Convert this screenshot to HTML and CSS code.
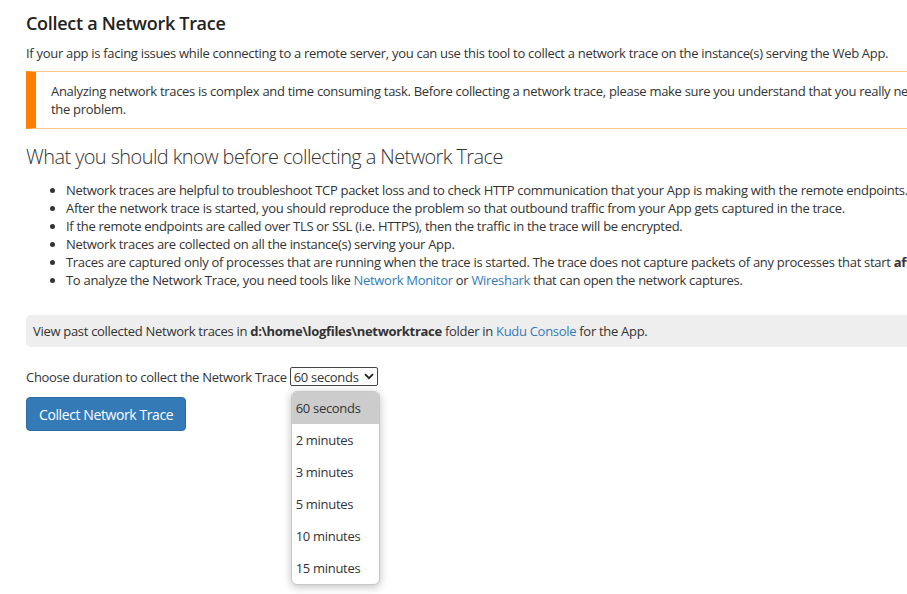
FILE: index.html
```html
<!DOCTYPE html>
<html lang="en">
<head>
  <meta charset="UTF-8">
  <meta name="viewport" content="width=device-width, initial-scale=1.0">
  <title>Collect a Network Trace</title>
  <link rel="stylesheet" href="styles.css">
</head>
<body>

  <div class="page">
    <h1>Collect a Network Trace</h1>
    <p class="intro">If your app is facing issues while connecting to a remote server, you can use this tool to collect a network trace on the instance(s) serving the Web App.</p>

    <div class="warning">
      Analyzing network traces is complex and time consuming task. Before collecting a network trace, please make sure you understand that you really need a network trace to troubleshoot<br>the problem.
    </div>

    <h2>What you should know before collecting a Network Trace</h2>
    <ul class="notes">
      <li>Network traces are helpful to troubleshoot TCP packet loss and to check HTTP communication that your App is making with the remote endpoints.</li>
      <li>After the network trace is started, you should reproduce the problem so that outbound traffic from your App gets captured in the trace.</li>
      <li>If the remote endpoints are called over TLS or SSL (i.e. HTTPS), then the traffic in the trace will be encrypted.</li>
      <li>Network traces are collected on all the instance(s) serving your App.</li>
      <li>Traces are captured only of processes that are running when the trace is started. The trace does not capture packets of any processes that start <b>after</b> the trace is started.</li>
      <li>To analyze the Network Trace, you need tools like <a href="#">Network Monitor</a> or <a href="#">Wireshark</a> that can open the network captures.</li>
    </ul>

    <div class="info">
      View past collected Network traces in <b>d:\home\logfiles\networktrace</b> folder in <a href="#">Kudu Console</a> for the App.
    </div>

    <div class="duration">
      <span>Choose duration to collect the Network Trace</span>
      <div class="select">
        <span>60 seconds</span>
        <svg width="10" height="7" viewBox="0 0 10 7"><path d="M1 1.2 L5 5.2 L9 1.2" fill="none" stroke="#222" stroke-width="1.8"/></svg>
        <ul class="options">
          <li class="selected">60 seconds</li>
          <li>2 minutes</li>
          <li>3 minutes</li>
          <li>5 minutes</li>
          <li>10 minutes</li>
          <li>15 minutes</li>
        </ul>
      </div>
    </div>

    <button class="btn">Collect Network Trace</button>
  </div>

</body>
</html>
```

FILE: styles.css
```css
html {
  overflow: hidden;
}
body {
  margin: 0;
  min-height: 594px;
  background-color: #fff;
  color: #333;
  font-family: "Open Sans", "Noto Sans", sans-serif;
  font-size: 13px;
  line-height: 18px;
  letter-spacing: -0.3px;
}
a {
  color: #337ab7;
  text-decoration: none;
}
.page {
  width: 1300px;
  padding: 11px 26px;
}
h1 {
  margin: 0;
  color: #222;
  font-size: 18px;
  font-weight: 600;
  line-height: 24px;
}
.intro {
  margin: 9px 0 9px;
}
.warning {
  width: 1200px;
  padding: 10px 16px 10px 15px;
  border-left: 10px solid #ff8000;
  border-top: 1px solid #fcc98c;
  border-bottom: 1px solid #fcc98c;
}
h2 {
  margin: 14px 0 0;
  font-size: 20px;
  font-weight: 300;
  line-height: 28px;
  letter-spacing: -0.6px;
}
.notes {
  margin: 10px 0 0;
  padding-left: 40px;
}
.info {
  margin-top: 26px;
  padding: 7px 7px;
  background-color: #eee;
  border-radius: 5px 0 0 5px;
}
.duration {
  display: flex;
  align-items: center;
  gap: 3px;
  margin-top: 20px;
}
.select {
  position: relative;
  display: flex;
  align-items: center;
  gap: 5px;
  height: 17px;
  padding: 0 3px;
  border: 1px solid #444;
  border-radius: 2px;
}
.options {
  position: absolute;
  top: 23px;
  left: 0;
  width: 87px;
  margin: 0;
  padding: 0;
  list-style: none;
  background: #fff;
  border: 1px solid #c8c8c8;
  border-radius: 6px;
  overflow: hidden;
  box-shadow: 0 2px 8px rgba(0, 0, 0, 0.25);
}
.options li {
  padding: 0 4px;
  line-height: 32px;
}
.options .selected {
  background-color: #ccc;
}
.btn {
  margin-top: 11px;
  padding: 0 12px;
  height: 34px;
  background-color: #337ab7;
  color: #fff;
  border: 1px solid #2e6da4;
  border-radius: 4px;
  font-family: inherit;
  font-size: 14px;
  letter-spacing: -0.4px;
}
```
